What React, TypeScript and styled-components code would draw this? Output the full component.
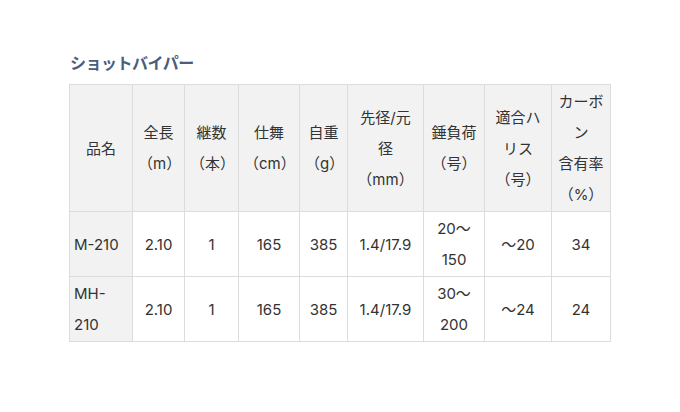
import { FunctionComponent } from 'react'
import styled, { createGlobalStyle } from 'styled-components'

const GlobalStyle = createGlobalStyle`
  html, body {
    margin: 0;
    padding: 0;
    background: #fff;
  }
  body {
    font-family: Inter, "Noto Sans CJK JP", sans-serif;
    color: #333;
  }
`

const Page = styled.div`
  padding: 52px 0 0 69px;
`

const Title = styled.h2`
  margin: 0 0 12px 1px;
  font-family: "Noto Sans CJK JP", sans-serif;
  font-size: 16px;
  line-height: 20px;
  font-weight: bold;
  color: #4b5d7c;
  letter-spacing: -0.5px;
`

const Table = styled.table`
  border-collapse: collapse;
  table-layout: fixed;
  width: 542px;
  font-size: 15px;
`

const Cell = styled.td<{ $head?: boolean }>`
  border: 1px solid #dcdcdc;
  padding: 1px 5px;
  line-height: 31px;
  text-align: center;
  vertical-align: middle;
  font-weight: normal;
  background: ${(p) => (p.$head ? '#f2f2f2' : '#fff')};
`

const NameCell = styled(Cell)`
  text-align: left;
  padding: 1px 4px;
`

const widths = [63, 52, 54, 61, 48, 76, 61, 67, 59]

const headers = [
  '品名',
  '全長\n（m）',
  '継数\n（本）',
  '仕舞\n（cm）',
  '自重\n（g）',
  '先径/元径\n（mm）',
  '錘負荷\n（号）',
  '適合ハリス\n（号）',
  'カーボン\n含有率\n（%）',
]

const rows = [
  ['M-210', '2.10', '1', '165', '385', '1.4/17.9', '20〜150', '〜20', '34'],
  ['MH-210', '2.10', '1', '165', '385', '1.4/17.9', '30〜200', '〜24', '24'],
]

const Lines: FunctionComponent<{ text: string }> = ({ text }) => (
  <>
    {text.split('\n').map((line, i) => (
      <span key={i}>
        {i > 0 && <br />}
        {line}
      </span>
    ))}
  </>
)

const App: FunctionComponent = () => (
  <Page>
    <GlobalStyle />
    <Title>ショットバイパー</Title>
    <Table>
      <colgroup>
        {widths.map((w, i) => (
          <col key={i} style={{ width: w }} />
        ))}
      </colgroup>
      <thead>
        <tr>
          {headers.map((h, i) => (
            <Cell as="th" $head key={i}>
              <Lines text={h} />
            </Cell>
          ))}
        </tr>
      </thead>
      <tbody>
        {rows.map((r, ri) => (
          <tr key={ri}>
            {r.map((c, ci) =>
              ci === 0 ? (
                <NameCell $head key={ci}>
                  {c}
                </NameCell>
              ) : (
                <Cell key={ci}>{c}</Cell>
              )
            )}
          </tr>
        ))}
      </tbody>
    </Table>
  </Page>
)

export default App
